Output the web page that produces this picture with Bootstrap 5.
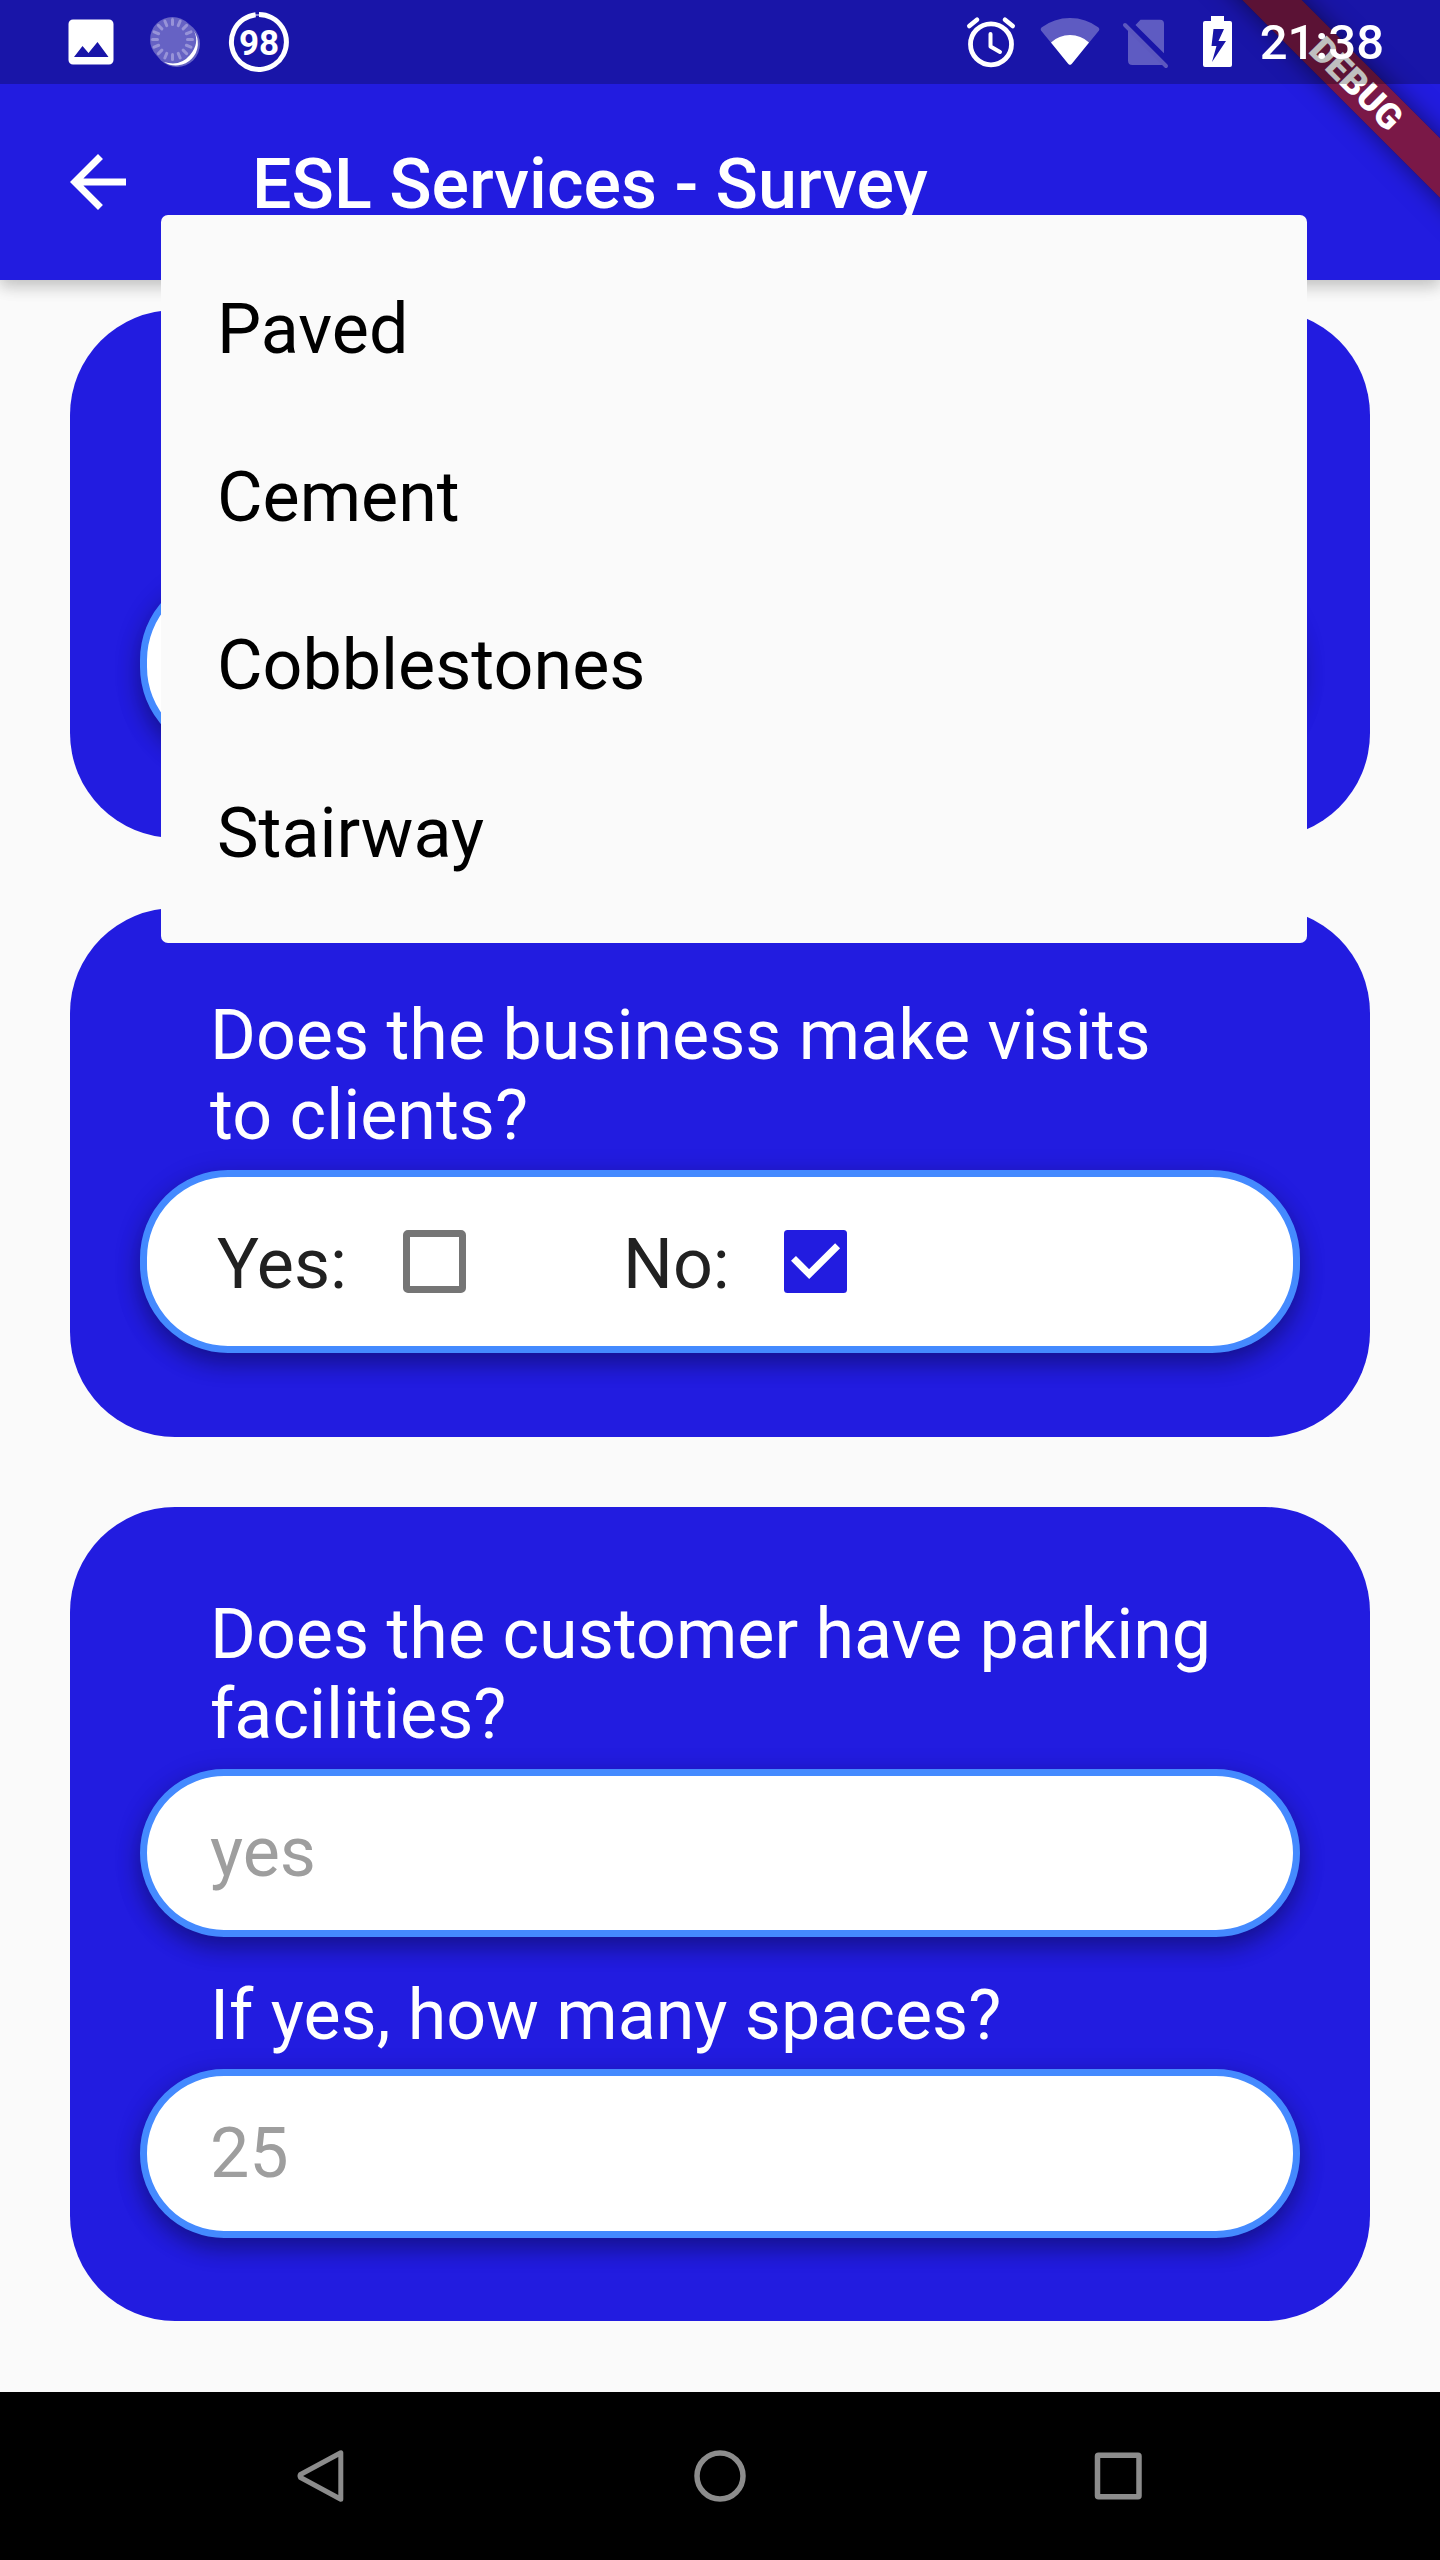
<!DOCTYPE html>
<html lang="en">
<head>
<meta charset="utf-8">
<meta name="viewport" content="width=device-width, initial-scale=1">
<title>ESL Services - Survey</title>
<link href="https://cdn.jsdelivr.net/npm/bootstrap@5.3.0/dist/css/bootstrap.min.css" rel="stylesheet">
<style>
  :root { --brand: #221ce0; --accent: #448aff; }
  body { margin: 0; background: #fafafa; }
  .screen { width: 1440px; height: 2560px; background: #fafafa; font-family: Roboto, "Liberation Sans", sans-serif; font-size: 70px; line-height: 80px; color: #212121; }
  .statusbar { height: 84px; background: rgba(0,0,0,.25); z-index: 30; top: 0; left: 0; padding: 0 56px 0 68px; }
  .statusbar svg { display: block; flex: none; }
  .clock { font-size: 49px; font-weight: 500; line-height: 58px; color: #fff; margin-left: 16px; padding-top: 1px; }
  .appbar { height: 280px; padding: 84px 56px 0; background: var(--brand); color: #fff; z-index: 5; box-shadow: 0 7px 14px rgba(0,0,0,.16), 0 3px 20px rgba(0,0,0,.1); flex: none; }
  .appbar-title { margin-left: 112px; font-weight: 500; padding-top: 3px; }
  .survey { padding: 30px 70px 0; gap: 70px; }
  .panel { background: var(--brand); border-radius: 105px; padding: 87px 70px 83px; }
  .panel-two { min-height: 528.400px; }
  .question { color: #fff; padding: 0 70px; margin-bottom: 15px; }
  .pill { background: #fff; border: 7px solid var(--accent); border-radius: 88px; height: 183px; box-shadow: 0 12px 22px rgba(0,0,0,.26), 0 5px 28px rgba(0,0,0,.16); padding: 0 63px; }
  .pill-field { height: 168.700px; border-radius: 84px; color: #9e9e9e; }
  .pill-field span { margin-top: -2px; }
  .spaces-q { margin-top: 37.300px; margin-bottom: 14.500px; }
  .choice { padding-top: 5px; }
  .choice-box { padding-left: 7px; }
  .choice-box .tick { margin-left: 56px; }
  .yes-box { width: 406px; }
  .no-box .tick { margin-left: 54px; }
  .tick { width: 63px; height: 63px; display: block; }
  .option-menu { left: 161px; top: 215px; width: 1146px; height: 728px; padding: 28px 0; background: #fafafa; border-radius: 7px; z-index: 20; color: #000; }
  .option-menu li { height: 168px; padding: 4px 56px 0; }
  .ribbon-clip { top: 0; right: 0; width: 320px; height: 320px; z-index: 25; }
  .ribbon, .ribbon-shade { width: 460px; height: 42px; left: 6px; top: 63px; transform: rotate(45deg); }
  .ribbon { background: rgba(183,28,28,.627); color: #fff; font-size: 35.700px; font-weight: 900; line-height: 42px; }
  .ribbon-shade { box-shadow: 0 0 25px rgba(0,0,0,.5); background: rgba(0,0,0,.36); }
  .navkeys { height: 168px; background: #000; flex: none; padding: 0 296px; }
</style>
</head>
<body>
<div class="screen position-relative overflow-hidden d-flex flex-column">

  <div class="statusbar position-absolute w-100 d-flex align-items-center">
    <svg width="230" height="84" viewBox="68 0 230 84">
      <path fill="#fff" fill-rule="evenodd" d="M73 19.500h36a4.500 4.500 0 0 1 4.500 4.500v36a4.500 4.500 0 0 1-4.500 4.500h-36a4.500 4.500 0 0 1-4.500-4.500v-36a4.500 4.500 0 0 1 4.500-4.500zM74 57h34.500L97.500 42l-9 11-6-7z"/>
      <circle cx="177" cy="44" r="23" fill="#fff" fill-opacity=".33"/>
      <path d="M194 31A22 22 0 0 1 164 62Q180 67 190 55T194 31z" fill="#fff"/>
      <circle cx="172.500" cy="39.500" r="22.500" fill="#6662c4"/>
      <g stroke="#9793d8" stroke-width="3" stroke-linecap="round">
        <path id="ray" d="M172.500 19.500v5"/>
        <use href="#ray" transform="rotate(22.500 172.500 39.500)"/><use href="#ray" transform="rotate(45 172.500 39.500)"/><use href="#ray" transform="rotate(67.500 172.500 39.500)"/><use href="#ray" transform="rotate(90 172.500 39.500)"/><use href="#ray" transform="rotate(112.500 172.500 39.500)"/><use href="#ray" transform="rotate(135 172.500 39.500)"/><use href="#ray" transform="rotate(157.500 172.500 39.500)"/><use href="#ray" transform="rotate(180 172.500 39.500)"/><use href="#ray" transform="rotate(202.500 172.500 39.500)"/><use href="#ray" transform="rotate(225 172.500 39.500)"/><use href="#ray" transform="rotate(247.500 172.500 39.500)"/><use href="#ray" transform="rotate(270 172.500 39.500)"/><use href="#ray" transform="rotate(292.500 172.500 39.500)"/><use href="#ray" transform="rotate(315 172.500 39.500)"/><use href="#ray" transform="rotate(337.500 172.500 39.500)"/>
      </g>
      <path d="M259 14.500A27.500 27.500 0 1 1 255.600 14.700" fill="none" stroke="#fff" stroke-width="5"/>
      <path d="M255 15h5" stroke="#fff" stroke-width="1"/>
      <text x="259" y="54.500" text-anchor="middle" font-family="Roboto" font-weight="700" font-size="35" fill="#fff">98</text>
    </svg>
    <svg class="ms-auto" width="284" height="84" viewBox="960 0 284 84">
      <g fill="none" stroke="#fff" stroke-linecap="round" stroke-linejoin="round">
        <circle cx="991" cy="44.300" r="20.500" stroke-width="4.800"/>
        <path d="M990.500 34v12.500l9.500 5.500" stroke-width="4"/>
        <path d="M969.300 26l7.700-6.300M1012.700 26l-7.700-6.300" stroke-width="4.600"/>
      </g>
      <path d="M1041 30.500Q1040 29 1041.500 27.500Q1054 18 1070 18T1098.500 27.500Q1100 29 1099 30.500L1072 63.500Q1070 66 1068 63.500z" fill="#fff" fill-opacity=".3"/>
      <path d="M1051 42.500Q1059 35 1070 35T1089 42.500L1072 63.500Q1070 66 1068 63.500z" fill="#fff"/>
      <path fill="#fff" fill-opacity=".3" d="M1135.500 25l5-5.200h19.500q4 0 4 4v29.500zM1128 28.500l36 36q-1.500.500-3 .500h-28.500q-4.500 0-4.500-4.500z"/>
      <path d="M1125 25l41 41" stroke="#5c58bf" stroke-width="4" stroke-linecap="round"/>
      <path fill="#fff" fill-rule="evenodd" d="M1211 16h13v5h6q2 0 2 2v42q0 2-2 2h-25q-2 0-2-2v-42q0-2 2-2h6zM1213.500 29l-2 17h5l-4.500 16 14-21h-7.500l5.500-12z"/>
    </svg>
    <div class="clock">21:38</div>
  </div>

  <header class="appbar position-relative d-flex align-items-center">
    <svg width="84" height="84" viewBox="0 0 24 24" fill="#fff"><path d="M20 11H7.830l5.590-5.590L12 4l-8 8 8 8 1.410-1.410L7.830 13H20z"/></svg>
    <div class="appbar-title text-nowrap">ESL Services - Survey</div>
  </header>

  <main class="survey d-flex flex-column flex-grow-1">
    <section class="panel panel-two d-flex flex-column justify-content-end">
      <div class="pill"></div>
    </section>

    <section class="panel panel-two">
      <div class="question">Does the business make visits<br>to clients?</div>
      <div class="pill d-flex align-items-center">
        <div class="d-flex align-items-center choice-box yes-box">
          <span class="choice">Yes:</span>
          <svg class="tick" viewBox="0 0 63 63"><rect x="3.500" y="3.500" width="56" height="56" rx="1.500" fill="none" stroke="#757575" stroke-width="7"/></svg>
        </div>
        <div class="d-flex align-items-center choice-box no-box">
          <span class="choice">No:</span>
          <svg class="tick" viewBox="0 0 63 63"><rect width="63" height="63" rx="3.500" fill="#221ce0"/><path d="M9.500 28.400l15.700 15.700L53.600 15.800" fill="none" stroke="#fff" stroke-width="7"/></svg>
        </div>
      </div>
    </section>

    <section class="panel">
      <div class="question text-nowrap">Does the customer have parking<br>facilities?</div>
      <div class="pill pill-field d-flex align-items-center"><span>yes</span></div>
      <div class="question spaces-q">If yes, how many spaces?</div>
      <div class="pill pill-field d-flex align-items-center"><span>25</span></div>
    </section>
  </main>

  <footer class="navkeys d-flex align-items-center justify-content-between">
    <svg width="48" height="56" viewBox="296 2448 48 56"><path d="M300.500 2474.500L340.800 2452.800V2499.300L300.500 2477.500Q299.500 2476 300.500 2474.500z" fill="none" stroke="#8c8c8c" stroke-width="5" stroke-linejoin="round"/></svg>
    <svg width="56" height="56" viewBox="691 2448 56 56"><circle cx="720" cy="2476" r="23" fill="none" stroke="#8c8c8c" stroke-width="5.500"/></svg>
    <svg width="50" height="56" viewBox="1094 2448 50 56"><rect x="1097.500" y="2455.300" width="41.500" height="41.500" rx="1" fill="none" stroke="#8c8c8c" stroke-width="5.500"/></svg>
  </footer>

  <ul class="option-menu position-absolute list-unstyled mb-0">
    <li class="d-flex align-items-center">Paved</li>
    <li class="d-flex align-items-center">Cement</li>
    <li class="d-flex align-items-center">Cobblestones</li>
    <li class="d-flex align-items-center">Stairway</li>
  </ul>

  <div class="ribbon-clip position-absolute overflow-hidden">
    <div class="ribbon-shade position-absolute"></div>
    <div class="ribbon position-absolute text-center">DEBUG</div>
  </div>
</div>
<script src="https://cdn.jsdelivr.net/npm/bootstrap@5.3.0/dist/js/bootstrap.bundle.min.js"></script>
</body>
</html>
